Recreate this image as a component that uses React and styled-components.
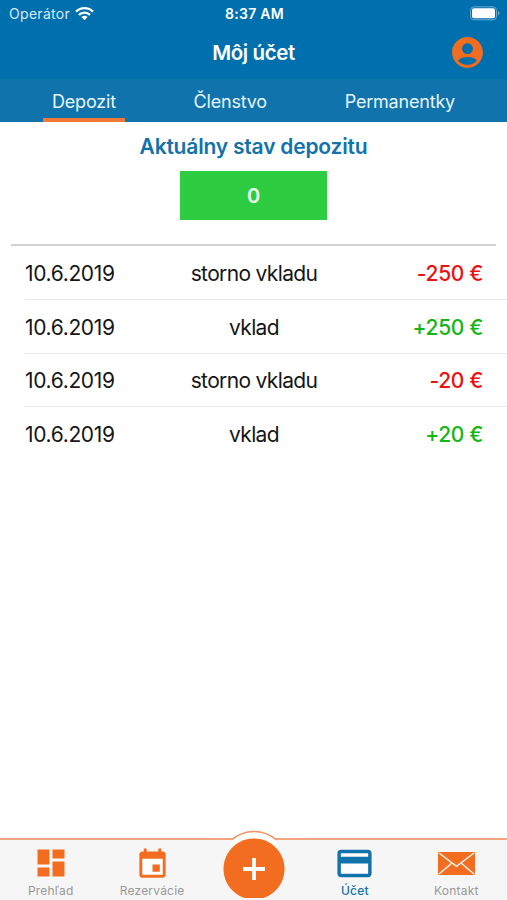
import React, { useState } from 'react';
import styled, { createGlobalStyle } from 'styled-components';
import { MdAccountCircle, MdCreditCard, MdDashboard, MdEvent } from 'react-icons/md';

const GlobalStyle = createGlobalStyle`
  * { box-sizing: border-box; }
  body {
    margin: 0;
    background: #fff;
    font-family: Inter, "Liberation Sans", sans-serif;
  }
  button {
    border: 0;
    padding: 0;
    background: none;
    font-family: inherit;
    cursor: pointer;
  }
  svg { display: block; }
`;

const Screen = styled.div`
  display: flex;
  flex-direction: column;
  height: 900px;
  width: 507px;
  overflow: hidden;
`;

const StatusBar = styled.div`
  display: grid;
  grid-template-columns: 1fr auto 1fr;
  align-items: center;
  height: 27px;
  padding: 0 7px 0 9px;
  background: #006fae;
  color: #fff;
`;

const Carrier = styled.div`
  display: flex;
  align-items: center;
  gap: 5px;
  font-size: 14px;
  letter-spacing: 0.3px;
  color: #d9ebf6;
`;

const Clock = styled.div`
  font-size: 14px;
  font-weight: 600;
  letter-spacing: 0.3px;
`;

const Battery = styled.svg`
  justify-self: end;
`;

const Header = styled.header`
  display: grid;
  grid-template-columns: 1fr auto 1fr;
  align-items: center;
  height: 52px;
  padding: 0 21px 2px;
  background: #006fae;
`;

const Title = styled.h1`
  grid-column: 2;
  margin: 0;
  font-size: 20.5px;
  font-weight: 600;
  letter-spacing: -0.4px;
  color: #fff;
`;

const Profile = styled.button`
  justify-self: end;
  height: 38px;
  color: #f36d21;
`;

const Tabs = styled.nav`
  display: flex;
  justify-content: space-between;
  height: 43px;
  padding: 0 43px;
  background: #1173ac;
`;

const Tab = styled.button`
  height: 43px;
  padding: 5px 9px 0;
  border-bottom: 4px solid ${props => props.$active ? '#f07a35' : 'transparent'};
  font-size: 18px;
  letter-spacing: -0.2px;
  color: #e6f6ff;
`;

const Balance = styled.section`
  display: flex;
  flex-direction: column;
  align-items: center;
  height: 124px;
  margin: 0 11px;
  padding-top: 12px;
  border-bottom: 2px solid #d3d3d3;
`;

const BalanceTitle = styled.h2`
  margin: 0 0 11px;
  font-size: 21px;
  line-height: 26px;
  font-weight: 600;
  letter-spacing: -0.2px;
  color: #1272aa;
`;

const Amount = styled.div`
  width: 147px;
  height: 49px;
  line-height: 51px;
  text-align: center;
  font-size: 20px;
  font-weight: 600;
  color: #f4fff4;
  background: #2ecc40;
`;

const List = styled.ul`
  flex: 1;
  margin: 0;
  padding: 0 0 0 25px;
  list-style: none;
`;

const Row = styled.li`
  display: grid;
  grid-template-columns: 140px 1fr 140px;
  align-items: center;
  height: 53.8px;
  padding: 2px 24px 0 0;
  border-bottom: 1px solid #e9e9e9;
  font-size: 21px;
  color: #151515;
  &:last-child {
    padding-top: 0;
    border-bottom: 0;
  }
`;

const Day = styled.span`
  letter-spacing: -0.35px;
`;

const Note = styled.span`
  text-align: center;
  letter-spacing: -0.65px;
`;

const Price = styled.span`
  text-align: right;
  font-weight: 500;
  letter-spacing: -0.35px;
  color: ${props => props.$minus ? '#ed1010' : '#13b613'};
`;

const BottomBar = styled.nav`
  position: relative;
  display: grid;
  grid-template-columns: repeat(5, 1fr);
  height: 62px;
  padding-top: 2px;
  border-top: 2px solid #f5a681;
  background: #f6f6f6;
`;

const NavItem = styled.button`
  display: flex;
  flex-direction: column;
  align-items: center;
  font-size: 12px;
  color: ${props => props.$active ? '#1272aa' : '#f36d21'};
`;

const NavIcon = styled.span`
  display: flex;
  align-items: center;
  height: 42px;
  padding-top: ${props => props.$drop || 0}px;
  /* white inside of the outlined icons */
  svg {
    background: ${props => props.$inside ? `linear-gradient(#fff, #fff) center / ${props.$inside} no-repeat` : 'none'};
  }
`;

const NavLabel = styled.span`
  line-height: 14px;
  font-weight: ${props => props.$active ? 500 : 400};
  letter-spacing: 0.2px;
  color: ${props => props.$active ? '#1272aa' : '#999'};
`;

// the round button sticks out over the top edge of the bar
const AddButton = styled.button`
  position: absolute;
  left: 50%;
  top: -10px;
  transform: translateX(-50%);
`;

const tabs = ['Depozit', 'Členstvo', 'Permanentky'];

const moves = [
  { date: '10.6.2019', note: 'storno vkladu', price: '-250 €' },
  { date: '10.6.2019', note: 'vklad', price: '+250 €' },
  { date: '10.6.2019', note: 'storno vkladu', price: '-20 €' },
  { date: '10.6.2019', note: 'vklad', price: '+20 €' },
];

function Wifi() {
  return (
    <svg width="19" height="15" viewBox="0 0 19 15" fill="none" stroke="#fff" strokeWidth="2.3">
      <path d="M1 5.6a12 12 0 0 1 17 0" />
      <path d="M4 8.9a7.8 7.8 0 0 1 11 0" />
      <path d="M9.5 14.2 6.4 11a4.4 4.4 0 0 1 6.2 0z" fill="#fff" stroke="none" />
    </svg>
  );
}

function Envelope() {
  return (
    <svg width="37" height="23" viewBox="0 0 37 24" preserveAspectRatio="none">
      <rect width="37" height="24" rx="1" fill="#f36d21" />
      <path d="M1 1l17.5 14L36 1M1 23l13-11.5M36 23L23 11.5" fill="none" stroke="#fff3eb" strokeWidth="1.5" />
    </svg>
  );
}

function Add() {
  return (
    <svg width="64" height="70" viewBox="0 0 64 70">
      <path d="M9.5 10A34 34 0 0 1 54.5 10V20H9.5z" fill="#fff" />
      <path d="M9.5 10A34 34 0 0 1 54.5 10" fill="none" stroke="#f39263" strokeWidth="1.4" />
      <path d="M22.6 68A30.5 30.5 0 1 1 41.4 68z" fill="#f36d21" />
      <path d="M32 28v22M21 39h22" stroke="#fff" strokeWidth="3.8" />
    </svg>
  );
}

function App() {
  const [tab, setTab] = useState('Depozit');

  return (
    <>
      <GlobalStyle />
      <Screen>
        <StatusBar>
          <Carrier>Operátor <Wifi /></Carrier>
          <Clock>8:37 AM</Clock>
          <Battery width="30" height="15" viewBox="0 0 30 15">
            <rect x="0.5" y="0.8" width="26" height="13" rx="3.5" fill="none" stroke="#69abd1" />
            <rect x="2" y="2.3" width="23" height="10" rx="2" fill="#fff" />
            <path d="M28 5v4.6q1.5-.8 1.5-2.3T28 5" fill="#69abd1" />
          </Battery>
        </StatusBar>
        <Header>
          <Title>Môj účet</Title>
          <Profile><MdAccountCircle size={37} /></Profile>
        </Header>
        <Tabs>
          {tabs.map(name => (
            <Tab key={name} $active={name === tab} onClick={() => setTab(name)}>{name}</Tab>
          ))}
        </Tabs>
        <Balance>
          <BalanceTitle>Aktuálny stav depozitu</BalanceTitle>
          <Amount>0</Amount>
        </Balance>
        <List>
          {moves.map((m, i) => (
            <Row key={i}>
              <Day>{m.date}</Day>
              <Note>{m.note}</Note>
              <Price $minus={m.price[0] === '-'}>{m.price}</Price>
            </Row>
          ))}
        </List>
        <BottomBar>
          <NavItem>
            <NavIcon><MdDashboard size={36} /></NavIcon>
            <NavLabel>Prehľad</NavLabel>
          </NavItem>
          <NavItem>
            <NavIcon $drop={3} $inside="22px 20px"><MdEvent size={35} /></NavIcon>
            <NavLabel>Rezervácie</NavLabel>
          </NavItem>
          <span />
          <NavItem $active>
            <NavIcon $inside="31px 24px"><MdCreditCard size={41} /></NavIcon>
            <NavLabel $active>Účet</NavLabel>
          </NavItem>
          <NavItem>
            <NavIcon><Envelope /></NavIcon>
            <NavLabel>Kontakt</NavLabel>
          </NavItem>
          <AddButton><Add /></AddButton>
        </BottomBar>
      </Screen>
    </>
  );
}

export default App;
